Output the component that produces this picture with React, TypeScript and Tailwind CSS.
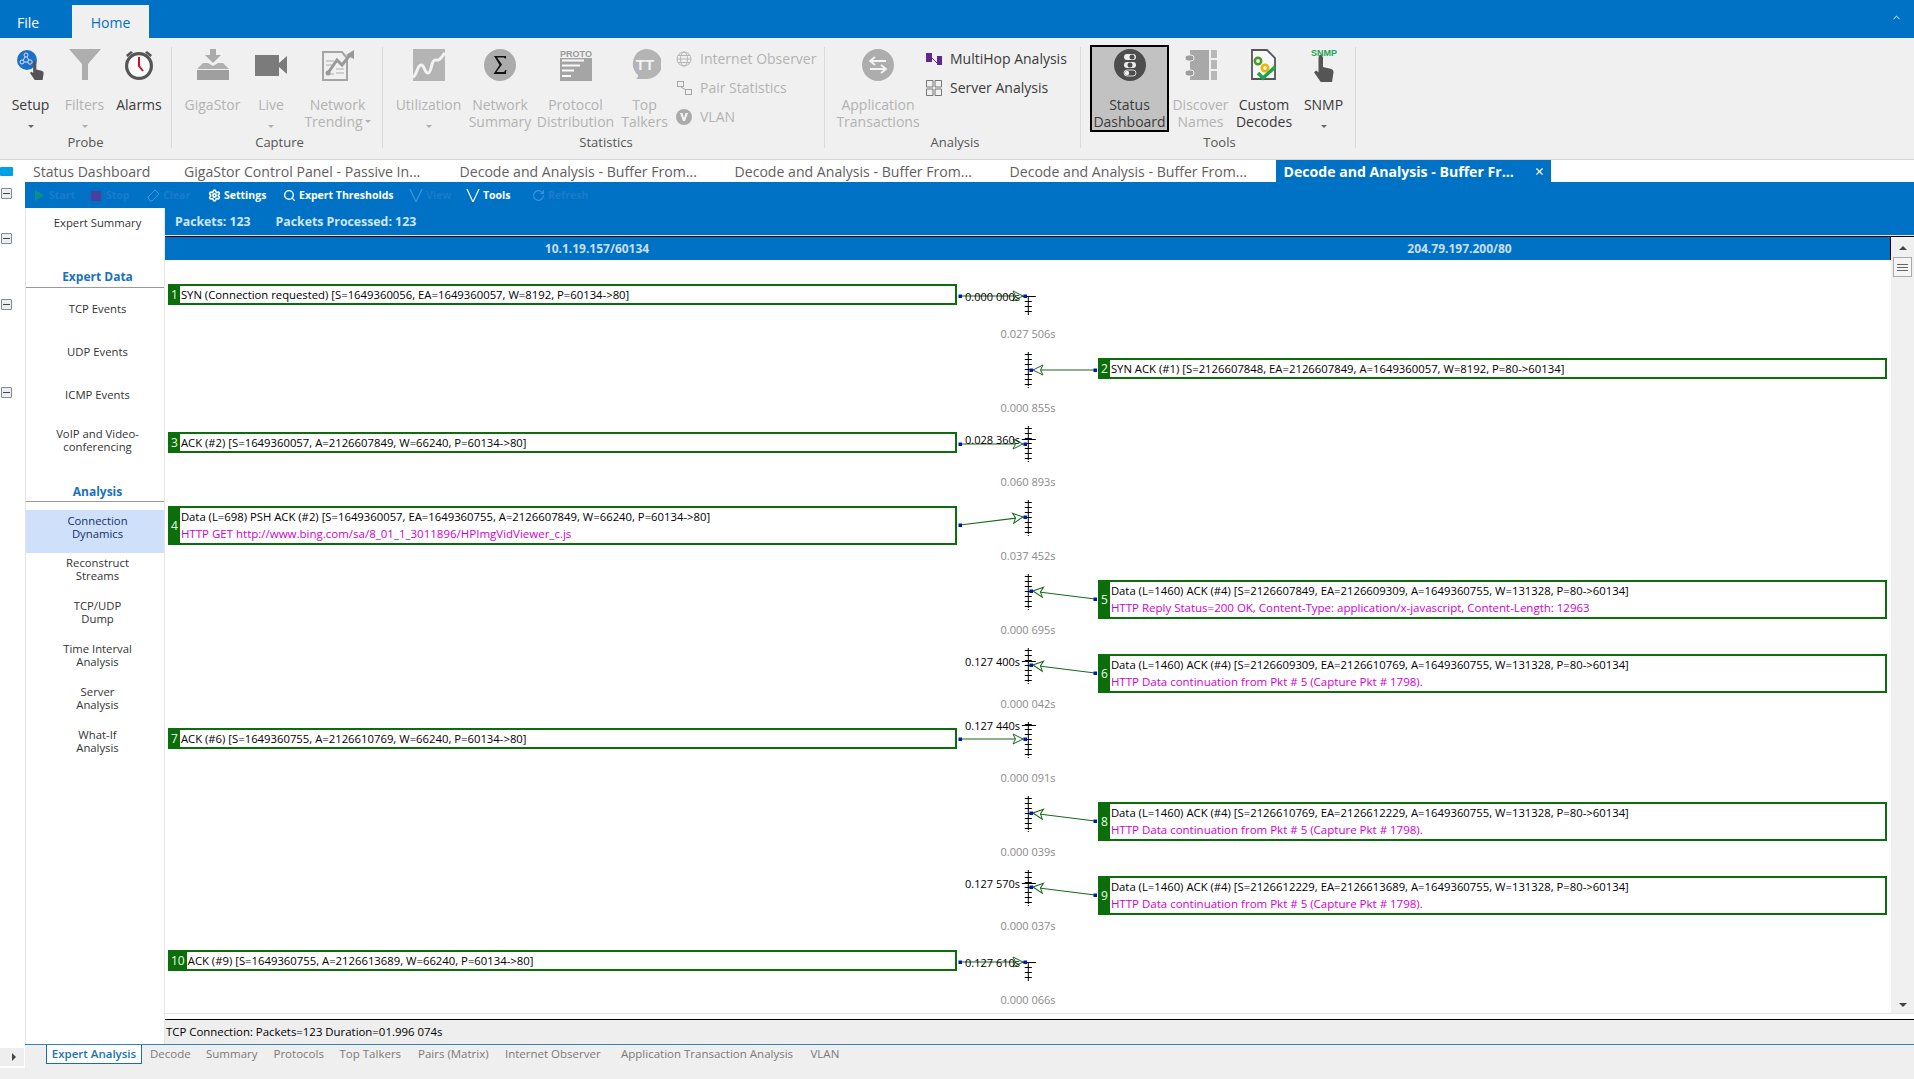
import { RotateCw, Search, Settings, X, ChevronUp } from "lucide-react";
import type { ReactNode } from "react";

type Packet = {
  n: number;
  side: "L" | "R";
  title: string;
  sub?: string;
  from: number;
  to: number;
  time?: string;
  timeY?: number;
  gap: string;
};

const packets: Packet[] = [
  { n: 1, side: "L", title: "SYN (Connection requested) [S=1649360056, EA=1649360057, W=8192, P=60134->80]", from: 18, to: 18, time: "0.000 000s", timeY: 18, gap: "0.027 506s" },
  { n: 2, side: "R", title: "SYN ACK (#1) [S=2126607848, EA=2126607849, A=1649360057, W=8192, P=80->60134]", from: 18, to: 18, gap: "0.000 855s" },
  { n: 3, side: "L", title: "ACK (#2) [S=1649360057, A=2126607849, W=66240, P=60134->80]", from: 18, to: 18, time: "0.028 360s", timeY: 13, gap: "0.060 893s" },
  { n: 4, side: "L", title: "Data (L=698) PSH ACK (#2) [S=1649360057, EA=1649360755, A=2126607849, W=66240, P=60134->80]", sub: "HTTP GET http://www.bing.com/sa/8_01_1_3011896/HPImgVidViewer_c.js", from: 25, to: 17, gap: "0.037 452s" },
  { n: 5, side: "R", title: "Data (L=1460) ACK (#4) [S=2126607849, EA=2126609309, A=1649360755, W=131328, P=80->60134]", sub: "HTTP Reply Status=200 OK, Content-Type: application/x-javascript, Content-Length: 12963", from: 25, to: 17, gap: "0.000 695s" },
  { n: 6, side: "R", title: "Data (L=1460) ACK (#4) [S=2126609309, EA=2126610769, A=1649360755, W=131328, P=80->60134]", sub: "HTTP Data continuation from Pkt # 5 (Capture Pkt # 1798).", from: 25, to: 17, time: "0.127 400s", timeY: 13, gap: "0.000 042s" },
  { n: 7, side: "L", title: "ACK (#6) [S=1649360755, A=2126610769, W=66240, P=60134->80]", from: 17, to: 17, time: "0.127 440s", timeY: 3, gap: "0.000 091s" },
  { n: 8, side: "R", title: "Data (L=1460) ACK (#4) [S=2126610769, EA=2126612229, A=1649360755, W=131328, P=80->60134]", sub: "HTTP Data continuation from Pkt # 5 (Capture Pkt # 1798).", from: 25, to: 17, gap: "0.000 039s" },
  { n: 9, side: "R", title: "Data (L=1460) ACK (#4) [S=2126612229, EA=2126613689, A=1649360755, W=131328, P=80->60134]", sub: "HTTP Data continuation from Pkt # 5 (Capture Pkt # 1798).", from: 25, to: 17, time: "0.127 570s", timeY: 13, gap: "0.000 037s" },
  { n: 10, side: "L", title: "ACK (#9) [S=1649360755, A=2126613689, W=66240, P=60134->80]", from: 18, to: 18, time: "0.127 610s", timeY: 18, gap: "0.000 066s" },
];

function PacketBox({ p }: { p: Packet }) {
  return (
    <div className="flex border-2 border-[#0b6e0b] bg-white">
      <div className="flex items-center bg-[#0b6e0b] pl-[1px] pr-[2px] text-[12px] text-[#e8ffe8]">{p.n}</div>
      <div className="pl-[1px] text-[11.300px] text-black">
        <div>{p.title}</div>
        {p.sub && <div className="pb-[1px] text-[11.500px] text-[#d000d0]">{p.sub}</div>}
      </div>
    </div>
  );
}

function Timeline({ p, index }: { p: Packet; index: number }) {
  const ax = 71.3;
  const left = p.side === "L";
  const x0 = left ? 3 : 138;
  const x1 = left ? 68 : 74;
  const angle = (Math.atan2(p.to - p.from, x1 - x0) * 180) / Math.PI;
  const first = index === 0 || index === 9;
  const ticks = first ? [18, 23, 28, 33] : [2, 7, 12, 17, 22, 27, 32];
  return (
    <div className="relative w-[141px] text-[11px]">
      <svg width="141" height="74" className="absolute left-0 top-0 overflow-visible">
        <line x1={ax} x2={ax} y1={first ? 18 : 0} y2="37" stroke="#000" strokeWidth="1" strokeDasharray="34 1 1" />
        {ticks.map((t) => (
          <line key={t} x1={ax - 3.5} x2={ax + 3.5} y1={t + 0.5} y2={t + 0.5} stroke="#000" />
        ))}
        {p.timeY !== undefined && <line x1={ax - 6.5} x2={ax + 7.5} y1={p.timeY + 0.5} y2={p.timeY + 0.5} stroke="#000" />}
        <line x1={x0} y1={p.from} x2={x1} y2={p.to} stroke="#16691a" strokeWidth="1.2" />
        <g transform={`translate(${x1 - Math.cos((angle * Math.PI) / 180) * 2} ${p.to}) rotate(${angle})`}>
          <path d="M0 0 L-10 -5 L-7.5 0 L-10 5 Z" fill="#fff" stroke="#16691a" strokeWidth="1" />
        </g>
        <rect x={x0 - 1.5} y={p.from - 1.5} width="3.5" height="3.5" fill="#0018b8" />
        <rect x={x1 - 1.5} y={p.to - 1.5} width="3.5" height="3.5" fill="#0018b8" />
      </svg>
      {p.time && (
        <span className="absolute left-[8px] -translate-y-1/2 whitespace-nowrap leading-none text-black" style={{ top: p.timeY }}>
          {p.time}
        </span>
      )}
      <span className="absolute left-[71px] top-[55px] -translate-x-1/2 -translate-y-1/2 whitespace-nowrap leading-none text-[#8a8a8a]">{p.gap}</span>
    </div>
  );
}

function PacketRow({ p, index }: { p: Packet; index: number }) {
  return (
    <div className="flex h-[74px]">
      <div className="w-[792px] pl-[3px] pt-[6px]">{p.side === "L" && <PacketBox p={p} />}</div>
      <Timeline p={p} index={index} />
      <div className="w-[789px] pt-[6px]">{p.side === "R" && <PacketBox p={p} />}</div>
    </div>
  );
}

const Hand = ({ x = 0, y = 0, s = 1 }: { x?: number; y?: number; s?: number }) => (
  <path
    transform={`translate(${x} ${y}) scale(${s})`}
    d="M4 0c1.4 0 2 1 2 2v6l5 1.2c1.4.4 2 1.2 2 2.4L12 18H4.5L0 11.500l1.400-1.200L3 11.500V2c0-1 .4-2 1-2z"
    fill="#555"
  />
);

const icons: Record<string, ReactNode> = {
  setup: (
    <svg width="28" height="32" viewBox="0 0 28 32">
      <circle cx="10" cy="11" r="10" fill="#1f6fc4" />
      <g fill="none" stroke="#cfe4f8" strokeWidth="1">
        <circle cx="9" cy="6" r="2" />
        <circle cx="5" cy="13" r="2" />
        <circle cx="13" cy="13" r="2.200" />
        <path d="M8 8l-2 3.500M10 8l2 3.500M7 13h4" />
      </g>
      <Hand x={13} y={12} s={1.05} />
    </svg>
  ),
  filter: (
    <svg width="32" height="31" viewBox="0 0 32 31">
      <path d="M0 0h32L19 15v16h-6V15z" fill="#aeaeae" />
    </svg>
  ),
  alarm: (
    <svg width="30" height="31" viewBox="0 0 30 31">
      <circle cx="15" cy="17" r="12.400" fill="#fafafa" stroke="#565656" strokeWidth="3.200" />
      <path d="M2 6l5-4 2 1.500-5.500 4.500zM28 6l-5-4-2 1.500 5.500 4.500z" fill="#565656" />
      <path d="M15 8v9l4 5" fill="none" stroke="#c8102e" strokeWidth="2" />
    </svg>
  ),
  gigastor: (
    <svg width="32" height="31" viewBox="0 0 32 31">
      <path d="M13 0h6v6h5l-8 8-8-8h5z" fill="#aaa" />
      <path d="M6 14h5l5 3 5-3h5l6 6H0z" fill="#b0b0b0" />
      <path d="M0 21h32v10H0z" fill="#9f9f9f" />
    </svg>
  ),
  live: (
    <svg width="32" height="32" viewBox="0 0 32 32">
      <path d="M0 6h24v21H0zM24 14l8-7v18l-8-7z" fill="#7b7b7b" />
    </svg>
  ),
  trending: (
    <svg width="32" height="32" viewBox="0 0 32 32">
      <path d="M1 3h19l5 6v22H1z" fill="#f0f0f0" stroke="#a5a5a5" strokeWidth="2" />
      <path d="M4 12h8M4 16h6M14 20h8M14 24h8M6 25h6" stroke="#c4c4c4" strokeWidth="1.500" />
      <path d="M6 24l9-13 5 5 8-10" fill="none" stroke="#999" strokeWidth="3" />
      <path d="M24 6l8-5v9z" fill="#999" />
      <circle cx="6" cy="24" r="2.500" fill="#999" />
    </svg>
  ),
  utilization: (
    <svg width="32" height="32" viewBox="0 0 32 32">
      <path d="M0 0h32v32H0z" fill="#b4b4b4" />
      <path d="M0 28c4-1 4-12 8-12s3 8 7 8 3-13 7-13 3 2 10-7" fill="none" stroke="#f2f2f2" strokeWidth="3" />
    </svg>
  ),
  summary: (
    <svg width="32" height="32" viewBox="0 0 32 32">
      <circle cx="16" cy="16" r="16" fill="#ababab" />
      <path d="M10 7h12v2.500h-1L20 8.500h-7l5 7-5.500 7.500H20l1.500-2H22.500L21.800 25H9.500l6-9z" fill="#111" />
    </svg>
  ),
  proto: (
    <svg width="32" height="32" viewBox="0 0 32 32">
      <text x="0" y="7.500" fontSize="9" fontWeight="700" fill="#9a9a9a" fontFamily="Liberation Sans, sans-serif" textLength="32">PROTO</text>
      <path d="M0 9h32v23H0z" fill="#a5a5a5" />
      <path d="M2 11.500h22M2 16.500h18M2 21.500h12M2 27h9" stroke="#fafafa" strokeWidth="2" />
    </svg>
  ),
  talkers: (
    <svg width="32" height="32" viewBox="0 0 32 32">
      <path d="M16 0a16 15 0 0 1 2 30H7c1.500-1 2-2 2-4A15 15 0 0 1 16 0z" fill="#b4b4b4" />
      <text x="16" y="21" textAnchor="middle" fontSize="15" fontWeight="700" fill="#f2f2f2" fontFamily="Liberation Sans, sans-serif">TT</text>
    </svg>
  ),
  app: (
    <svg width="32" height="32" viewBox="0 0 32 32">
      <circle cx="16" cy="16" r="16" fill="#adadad" />
      <path d="M24 12H10M13 8l-5 4 5 4M8 20h15M19 16l5 4-5 4" fill="none" stroke="#f4f4f4" strokeWidth="1.800" />
    </svg>
  ),
  status: (
    <svg width="32" height="32" viewBox="0 0 32 32">
      <circle cx="16" cy="16" r="16" fill="#4d4d4d" />
      <rect x="10" y="5" width="12" height="6" rx="3" fill="#eee" />
      <rect x="10" y="13" width="12" height="6" rx="3" fill="#eee" />
      <rect x="10" y="21" width="12" height="6" rx="3" fill="none" stroke="#ddd" />
      <circle cx="18" cy="8" r="2.500" fill="#4d4d4d" />
      <circle cx="16" cy="16" r="2.500" fill="#4d4d4d" />
      <circle cx="13" cy="24" r="2.200" fill="#eee" />
    </svg>
  ),
  discover: (
    <svg width="32" height="32" viewBox="0 0 32 32">
      <path d="M5 1h19v30H5z" fill="#a8a8a8" />
      <path d="M26 1h6v8h-6zM26 11h6v9h-6zM26 22h6v9h-6z" fill="#b8b8b8" />
      <rect x="0" y="6" width="9" height="6" rx="3" fill="#9d9d9d" stroke="#f0f0f0" />
      <rect x="0" y="21" width="9" height="6" rx="3" fill="#9d9d9d" stroke="#f0f0f0" />
    </svg>
  ),
  decodes: (
    <svg width="26" height="32" viewBox="0 0 26 32">
      <path d="M1 1h15l8 8v21H1z" fill="#f7f7f7" stroke="#555" strokeWidth="1.800" />
      <circle cx="7" cy="12" r="3.200" fill="#f0f0f0" stroke="#4a9a2a" strokeWidth="2.500" />
      <circle cx="14" cy="19" r="3.200" fill="#f0f0f0" stroke="#f0b400" strokeWidth="2.500" />
      <path d="M7 24l5 5 12-11" fill="none" stroke="#1fa64a" strokeWidth="3.500" />
    </svg>
  ),
  snmp: (
    <svg width="32" height="33" viewBox="0 0 32 33">
      <text x="16" y="7" textAnchor="middle" fontSize="9" fontWeight="700" fill="#23a455" fontFamily="Liberation Sans, sans-serif">SNMP</text>
      <Hand x={6} y={6} s={1.5} />
    </svg>
  ),
};

const Caret = ({ light }: { light?: boolean }) => (
  <span className={`inline-block h-0 w-0 border-x-[3px] border-t-[3px] border-x-transparent ${light ? "border-t-[#b0b0b0]" : "border-t-[#666]"}`} />
);

function Big({ w, icon, lines, off, caret, active }: { w: string; icon: string; lines: ReactNode[]; off?: boolean; caret?: boolean; active?: boolean }) {
  return (
    <div className={`flex h-[87px] shrink-0 flex-col items-center whitespace-nowrap text-center leading-[17px] ${w} ${off ? "text-[#b3b3b3]" : "text-[#3a3a3a]"} ${active ? "-mt-[2px] border-2 border-black bg-[#c2c2c2]" : ""}`}>
      <div className="flex h-[49px] items-start justify-center pt-[1.500px]">{icons[icon]}</div>
      {lines.map((l, i) => (
        <div key={i}>{l}</div>
      ))}
      {caret && (
        <div className="mt-[9px] flex h-[8px] items-center">
          <Caret light={off} />
        </div>
      )}
    </div>
  );
}

function Small({ icon, label, off }: { icon: ReactNode; label: string; off?: boolean }) {
  return (
    <div className={`flex h-[29px] items-center whitespace-nowrap ${off ? "text-[#b3b3b3]" : "text-[#3a3a3a]"}`}>
      <span className="flex w-[16px] justify-center">{icon}</span>
      <span className="ml-[8px]">{label}</span>
    </div>
  );
}

function Group({ w, label, pad, children }: { w: string; label: string; pad?: string; children: ReactNode }) {
  return (
    <div className={`mt-[9px] flex h-[101px] shrink-0 flex-col border-r border-[#d9d9d9] ${w}`}>
      <div className="flex h-[87px]">{children}</div>
      <div className={`text-center text-[13px] leading-[17px] text-[#555] ${pad ?? ""}`}>{label}</div>
    </div>
  );
}

function Minus({ className }: { className: string }) {
  return (
    <div className={`flex h-[11px] w-[11px] items-center justify-center rounded-[1px] border border-[#808890] bg-[#eceef2] ${className}`}>
      <div className="h-[1px] w-[7px] bg-[#444]" />
    </div>
  );
}

function ToolItem({ w, icon, label, off }: { w: string; icon: ReactNode; label: string; off?: boolean }) {
  return (
    <div className={`flex shrink-0 items-center whitespace-nowrap ${w} ${off ? "text-[#1b7bc9]" : "text-white"}`}>
      <span className="flex w-[14px] justify-center">{icon}</span>
      <span className="ml-[3px]">{label}</span>
    </div>
  );
}

const VIcon = ({ color }: { color: string }) => (
  <svg width="14" height="13" viewBox="0 0 14 13">
    <path d="M1 0l6 13 6-13" fill="none" stroke={color} strokeWidth="1.200" />
  </svg>
);

function SideItem({ children, h = "h-[43px]" }: { children: ReactNode; h?: string }) {
  return <div className={`flex items-center justify-center pb-[2px] pl-[5px] text-center leading-[13px] text-[#333] ${h}`}>{children}</div>;
}

function SideTwo({ a, b, on }: { a: string; b: string; on?: boolean }) {
  return (
    <div className={`h-[42.900px] pl-[5px] pt-[3.500px] text-center leading-[13px] ${on ? "bg-[#cfe0fb] text-[#14306e]" : "text-[#333]"}`}>
      <div>{a}</div>
      <div>{b}</div>
    </div>
  );
}

const sans = "font-['Open_Sans',sans-serif]";

export default function App() {
  return (
    <div className={`flex h-[1079px] w-[1914px] flex-col overflow-hidden bg-white text-[14px] ${sans}`}>
      {/* title bar */}
      <div className="flex h-[38px] items-end bg-[#0072c6] pr-[12px]">
        <div className="w-[72px] pb-[5px] pl-[17px] text-[14px] leading-[20px] text-white">File</div>
        <div className="flex h-[33px] w-[77px] items-center justify-center bg-[#f0f0f0] pt-[2px] text-[14px] text-[#0072c6]">Home</div>
        <div className="ml-auto self-center pb-[4px] text-white">
          <ChevronUp size={11} strokeWidth={2} />
        </div>
      </div>

      {/* ribbon */}
      <div className="flex h-[122px] border-b border-[#d6d6d6] bg-[#f0f0f0] text-[14px]">
        <Group w="w-[172px]" label="Probe">
          <Big w="w-[61px]" icon="setup" lines={["Setup"]} caret />
          <Big w="w-[47px]" icon="filter" lines={["Filters"]} off caret />
          <Big w="w-[62px]" icon="alarm" lines={["Alarms"]} />
        </Group>
        <Group w="w-[211px]" label="Capture" pad="pl-[5px]">
          <Big w="w-[81px]" icon="gigastor" lines={["GigaStor"]} off />
          <Big w="w-[36px]" icon="live" lines={["Live"]} off caret />
          <Big
            w="w-[92px] pl-[5px]"
            icon="trending"
            off
            lines={[
              "Network",
              <span className="inline-flex items-center gap-[2px]" key="t">
                Trending
                <Caret light />
              </span>,
            ]}
          />
        </Group>
        <Group w="w-[442px]" label="Statistics" pad="pl-[5px]">
          <Big w="w-[91px]" icon="utilization" lines={["Utilization"]} off caret />
          <Big w="w-[52px]" icon="summary" lines={["Network", "Summary"]} off />
          <Big w="w-[99px]" icon="proto" lines={["Protocol", "Distribution"]} off />
          <Big w="w-[39px]" icon="talkers" lines={["Top", "Talkers"]} off />
          <div className="-mt-[3px] ml-[12px]">
            <Small
              off
              label="Internet Observer"
              icon={
                <svg width="16" height="16" viewBox="0 0 16 16" fill="none" stroke="#b5b5b5">
                  <circle cx="8" cy="8" r="7" />
                  <ellipse cx="8" cy="8" rx="3.500" ry="7" />
                  <path d="M1 8h14M2 4.500h12M2 11.500h12" />
                </svg>
              }
            />
            <Small
              off
              label="Pair Statistics"
              icon={
                <svg width="16" height="16" viewBox="0 0 16 16" fill="none" stroke="#a5a5a5">
                  <rect x="1.500" y="1.500" width="6" height="5" />
                  <rect x="9.500" y="9.500" width="6" height="5" />
                  <path d="M5 7l5 3" />
                </svg>
              }
            />
            <Small
              off
              label="VLAN"
              icon={
                <svg width="16" height="16" viewBox="0 0 16 16">
                  <circle cx="8" cy="8" r="8" fill="#ababab" />
                  <path d="M4 4h2.500L8 9l1.500-5H12l-3 8H7z" fill="#f4f4f4" />
                </svg>
              }
            />
          </div>
        </Group>
        <Group w="w-[256px]" label="Analysis" pad="pl-[5px]">
          <Big w="w-[106px]" icon="app" lines={["Application", "Transactions"]} off />
          <div className="-ml-[5px] -mt-[3px]">
            <Small
              label="MultiHop Analysis"
              icon={
                <svg width="16" height="14" viewBox="0 0 16 14">
                  <path d="M0 1h6v9H0z" fill="#5b2a8c" />
                  <path d="M6 6l5 5" stroke="#5b2a8c" />
                  <path d="M11 4h5v9h-5z" fill="#5b2a8c" />
                </svg>
              }
            />
            <Small
              label="Server Analysis"
              icon={
                <svg width="16" height="16" viewBox="0 0 16 16" fill="none" stroke="#777">
                  <path d="M.500.500h6.500v6.500H.500zM9 .500h6.500v6.500H9zM.500 9h6.500v6.500H.500zM9 9h6.500v6.500H9z" />
                </svg>
              }
            />
          </div>
        </Group>
        <Group w="w-[275px]" label="Tools" pad="pl-[3px]">
          <div className="w-[9px]" />
          <Big w="w-[79px]" icon="status" lines={["Status", "Dashboard"]} active />
          <Big w="w-[63px]" icon="discover" lines={["Discover", "Names"]} off />
          <Big w="w-[64px]" icon="decodes" lines={["Custom", "Decodes"]} />
          <Big w="w-[55px]" icon="snmp" lines={["SNMP"]} caret />
        </Group>
      </div>

      {/* document tabs */}
      <div className="flex h-[22px] items-center bg-white text-[14.100px] leading-[22px] text-[#5f5f5f]">
        <div className="h-[9px] w-[13px] rounded-[1px] bg-[#00a0e4]" />
        <div className="ml-[20px] w-[151px] whitespace-nowrap pt-[1px]">Status Dashboard</div>
        <div className="w-[275.500px] whitespace-nowrap pt-[1px]">GigaStor Control Panel - Passive In...</div>
        <div className="w-[275px] whitespace-nowrap pt-[1px]">Decode and Analysis - Buffer From...</div>
        <div className="w-[275px] whitespace-nowrap pt-[1px]">Decode and Analysis - Buffer From...</div>
        <div className="w-[266px] whitespace-nowrap pt-[1px]">Decode and Analysis - Buffer From...</div>
        <div className="flex h-[22px] w-[275px] items-center justify-between bg-[#0072c6] pl-[8px] pr-[6px] font-bold text-white">
          <span className="whitespace-nowrap pt-[1px]">Decode and Analysis - Buffer Fr...</span>
          <X size={11} strokeWidth={2.500} />
        </div>
      </div>

      {/* workspace */}
      <div className="flex h-[862px]">
        <div className="w-[25px] shrink-0 pl-[1px]">
          <Minus className="mt-[6px]" />
          <Minus className="mt-[34px]" />
          <Minus className="mt-[55px]" />
          <Minus className="mt-[77px]" />
        </div>
        <div className="flex w-[1889px] flex-col">
          {/* toolbar */}
          <div className="flex h-[26px] items-center bg-[#0072c6] pl-[7px] pt-[1px] text-[10.500px] font-bold">
            <ToolItem w="w-[57px]" off label="Start" icon={<svg width="9" height="11" viewBox="0 0 9 11"><path d="M0 0l9 5.500L0 11z" fill="#0a8f8a" /></svg>} />
            <ToolItem w="w-[57px]" off label="Stop" icon={<span className="h-[10px] w-[10px] bg-[#4b3f9e]" />} />
            <ToolItem w="w-[61px]" off label="Clear" icon={<svg width="13" height="13" viewBox="0 0 13 13" fill="none" stroke="#3f94d8"><path d="M1 8l7-7 4 4-7 7H3z" /></svg>} />
            <ToolItem w="w-[75px]" label="Settings" icon={<Settings size={13} strokeWidth={3} />} />
            <ToolItem w="w-[127px]" label="Expert Thresholds" icon={<Search size={13} strokeWidth={2.500} />} />
            <ToolItem w="w-[57px]" off label="View" icon={<VIcon color="#3f94d8" />} />
            <ToolItem w="w-[65px]" label="Tools" icon={<VIcon color="#ffffff" />} />
            <ToolItem w="w-[80px]" off label="Refresh" icon={<RotateCw size={13} color="#3f94d8" />} />
          </div>

          <div className="flex h-[836px]">
            {/* side menu */}
            <div className="w-[140px] shrink-0 border-x border-[#e6e6e6] bg-white text-[11.300px]">
              <SideItem h="h-[30px]">Expert Summary</SideItem>
              <div className="mt-[30px] h-[20px] border-b border-[#999] pl-[5px] text-center text-[12px] font-bold leading-[18px] text-[#1a72bb]">Expert Data</div>
              <SideItem>TCP Events</SideItem>
              <SideItem>UDP Events</SideItem>
              <SideItem>ICMP Events</SideItem>
              <SideItem h="h-[48px]">
                <span>
                  VoIP and Video-
                  <br />
                  conferencing
                </span>
              </SideItem>
              <div className="mt-[17px] h-[20px] border-b border-[#999] pl-[5px] text-center text-[12px] font-bold leading-[20px] text-[#1a72bb]">Analysis</div>
              <div className="mt-[8px]">
                <SideTwo a="Connection" b="Dynamics" on />
                <SideTwo a="Reconstruct" b="Streams" />
                <SideTwo a="TCP/UDP" b="Dump" />
                <SideTwo a="Time Interval" b="Analysis" />
                <SideTwo a="Server" b="Analysis" />
                <SideTwo a="What-If" b="Analysis" />
              </div>
            </div>

            {/* analysis view */}
            <div className="flex w-[1749px] flex-col">
              <div className="flex h-[27px] items-center gap-[25px] bg-[#0072c6] pl-[10px] pt-[2px] text-[12.300px] font-bold text-[#cfe6f8]">
                <span>Packets: 123</span>
                <span>Packets Processed: 123</span>
              </div>
              <div className="h-[2px] border-t border-[#dfe8ee] bg-black" />
              <div className="flex h-[776px]">
                <div className="flex w-[1726px] flex-col">
                  <div className="flex h-[23px] items-center border-r border-black bg-[#0072c6] text-[12px] font-bold text-[#c8dff0]">
                    <div className="w-[864px] text-center">10.1.19.157/60134</div>
                    <div className="w-[861px] text-center">204.79.197.200/80</div>
                  </div>
                  <div className="h-[753px] overflow-hidden pt-[18px] leading-[17px]">
                    {packets.map((p, i) => (
                      <PacketRow key={p.n} p={p} index={i} />
                    ))}
                  </div>
                </div>
                <div className="flex w-[23px] flex-col items-center justify-between bg-[#f0f0f0] pb-[6px] pt-[9px]">
                  <div className="flex w-full flex-col items-center">
                    <div className="h-0 w-0 border-x-[4px] border-b-[4px] border-x-transparent border-b-[#444]" />
                    <div className="mt-[7px] flex h-[20px] w-[19px] flex-col items-center justify-center gap-[2px] border border-[#aaa] bg-[#f5f5f5]">
                      <div className="h-[1px] w-[11px] bg-[#666]" />
                      <div className="h-[1px] w-[11px] bg-[#666]" />
                      <div className="h-[1px] w-[11px] bg-[#666]" />
                    </div>
                  </div>
                  <div className="h-0 w-0 border-x-[4px] border-t-[4px] border-x-transparent border-t-[#444]" />
                </div>
              </div>
              <div className="h-[6px] border-t border-[#e4e4e4] bg-white" />
              <div className="h-[1px] bg-black" />
              <div className="flex h-[24px] items-center bg-[#eeeeee] pl-[1px] text-[11.400px] text-black">TCP Connection: Packets=123 Duration=01.996 074s</div>
            </div>
          </div>
        </div>
      </div>

      {/* bottom tabs */}
      <div className="flex h-[35px] bg-[#efefef]">
        <div className="flex h-[24px] w-[25px] shrink-0 items-center justify-center bg-white pr-[1px] pt-[2px]">
          <div className="flex h-[18px] w-full items-center justify-end bg-[#eee] pr-[8px]">
            <div className="h-0 w-0 border-y-[4px] border-l-[4px] border-y-transparent border-l-[#444]" />
          </div>
        </div>
        <div className="flex h-[20px] w-[1889px] items-start border-t border-[#2f86b8] pl-[21px] text-[11.500px] leading-[18px] text-[#7a7a7a]">
          <div className="h-[19px] w-[96px] shrink-0 border-x border-b border-[#1c6ea8] bg-white text-center font-semibold text-[#1a72bb]">Expert Analysis</div>
          <div className="w-[64px] pl-[8px]">Decode</div>
          <div className="w-[67.500px]">Summary</div>
          <div className="w-[66px]">Protocols</div>
          <div className="w-[78.500px]">Top Talkers</div>
          <div className="w-[87px]">Pairs (Matrix)</div>
          <div className="w-[116px]">Internet Observer</div>
          <div className="w-[189.500px]">Application Transaction Analysis</div>
          <div>VLAN</div>
        </div>
      </div>
    </div>
  );
}
